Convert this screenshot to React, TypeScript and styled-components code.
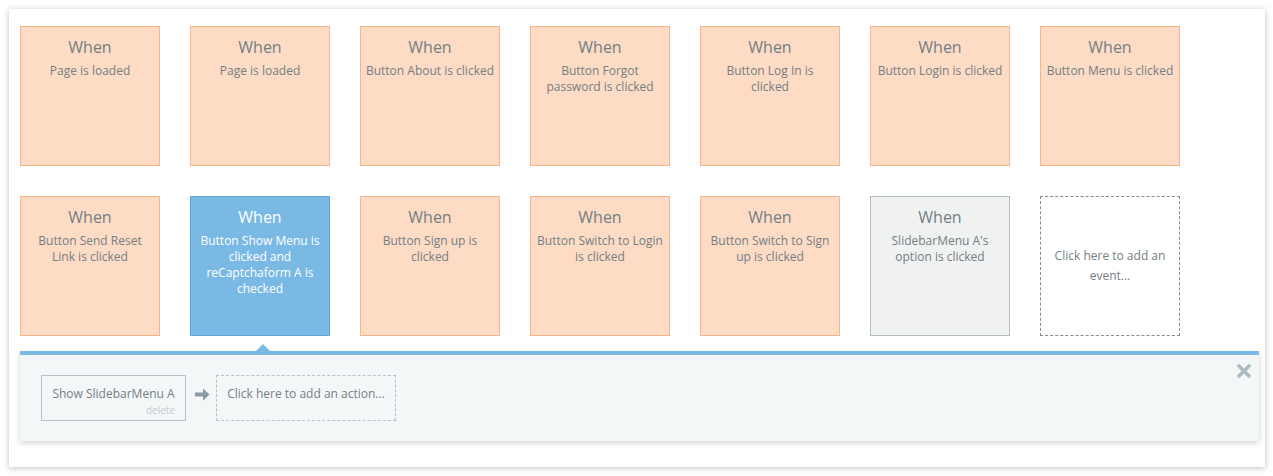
import React from 'react';
import styled, { createGlobalStyle } from 'styled-components';

const GlobalStyle = createGlobalStyle`
  body {
    margin: 0;
    background: #ffffff;
    font-family: 'Open Sans', 'Liberation Sans', sans-serif;
  }
`;

type Variant = 'normal' | 'active' | 'muted' | 'empty';

const palette: Record<Variant, { bg: string; border: string; color: string }> = {
  normal: { bg: '#fddbc4', border: '#f4b48a', color: '#737f85' },
  active: { bg: '#7bb9e5', border: '#5ea5d9', color: '#ffffff' },
  muted: { bg: '#f0f2f2', border: '#b3bec3', color: '#737f85' },
  empty: { bg: '#ffffff', border: '#8a8a8a', color: '#737f85' },
};

const Page = styled.div`
  padding: 9px 8px 9px 9px;
`;

const Sheet = styled.div`
  width: 1256px;
  height: 458px;
  box-sizing: border-box;
  background: #fff;
  box-shadow: 0 1px 6px rgba(0, 0, 0, 0.25);
  padding: 17px 0 0 11px;
`;

const Grid = styled.div`
  display: grid;
  grid-template-columns: repeat(7, 140px);
  column-gap: 30px;
  row-gap: 30px;
`;

const Card = styled.div<{ $variant: Variant }>`
  width: 140px;
  height: 140px;
  box-sizing: border-box;
  background: ${(p) => palette[p.$variant].bg};
  border: 1px ${(p) => (p.$variant === 'empty' ? 'dashed' : 'solid')} ${(p) => palette[p.$variant].border};
  color: ${(p) => palette[p.$variant].color};
  text-align: center;
  padding: 9px 4px 0;
  display: flex;
  flex-direction: column;
  align-items: center;
  ${(p) => (p.$variant === 'empty' ? 'justify-content: center; padding: 0 12px;' : '')}
`;

const When = styled.div`
  font-size: 16px;
  line-height: 22px;
`;

const Desc = styled.div`
  font-size: 12px;
  line-height: 16px;
  margin-top: 5px;
  white-space: pre-line;
`;

const AddEvent = styled.div`
  font-size: 12px;
  line-height: 20px;
`;

const Panel = styled.div`
  position: relative;
  margin-top: 15px;
  width: 1239px;
  height: 90px;
  box-sizing: border-box;
  background: #f4f7f8;
  border-top: 4px solid #7bb9e5;
  box-shadow: 0 2px 6px rgba(0, 0, 0, 0.18);
  padding: 20px 21px;
  display: flex;
  align-items: flex-start;
`;

const Pointer = styled.div<{ $left: number }>`
  position: absolute;
  top: -11px;
  left: ${(p) => p.$left}px;
  width: 0;
  height: 0;
  border-left: 7px solid transparent;
  border-right: 7px solid transparent;
  border-bottom: 7px solid #7bb9e5;
`;

const ActionBox = styled.div`
  width: 145px;
  height: 46px;
  box-sizing: border-box;
  border: 1px solid #b8c2c6;
  color: #737f85;
  font-size: 12px;
  line-height: 16px;
  display: flex;
  flex-direction: column;
  align-items: center;
  padding-top: 10px;
`;

const Delete = styled.span`
  align-self: flex-end;
  margin-right: 10px;
  font-size: 10px;
  line-height: 12px;
  margin-top: 2px;
  color: #c3cacd;
`;

const ArrowWrap = styled.div`
  width: 30px;
  height: 38px;
  box-sizing: border-box;
  display: flex;
  align-items: center;
  justify-content: center;
  padding-left: 2px;
`;

const AddAction = styled.div`
  width: 180px;
  height: 46px;
  box-sizing: border-box;
  border: 1px dashed #b8c2c6;
  color: #737f85;
  font-size: 12px;
  line-height: 16px;
  text-align: center;
  padding-top: 10px;
`;

const Close = styled.div`
  position: absolute;
  top: 9px;
  right: 8px;
  width: 14px;
  height: 14px;
  display: flex;
`;

type EventItem = { text: string; variant: Variant };

const events: EventItem[] = [
  { text: 'Page is loaded', variant: 'normal' },
  { text: 'Page is loaded', variant: 'normal' },
  { text: 'Button About is clicked', variant: 'normal' },
  { text: 'Button Forgot\npassword is clicked', variant: 'normal' },
  { text: 'Button Log In is\nclicked', variant: 'normal' },
  { text: 'Button Login is clicked', variant: 'normal' },
  { text: 'Button Menu is clicked', variant: 'normal' },
  { text: 'Button Send Reset\nLink is clicked', variant: 'normal' },
  { text: 'Button Show Menu is\nclicked and\nreCaptchaform A is\nchecked', variant: 'active' },
  { text: 'Button Sign up is\nclicked', variant: 'normal' },
  { text: 'Button Switch to Login\nis clicked', variant: 'normal' },
  { text: 'Button Switch to Sign\nup is clicked', variant: 'normal' },
  { text: "SlidebarMenu A's\noption is clicked", variant: 'muted' },
];

function App() {
  return (
    <Page>
      <GlobalStyle />
      <Sheet>
        <Grid>
          {events.map((ev, i) => (
            <Card key={i} $variant={ev.variant}>
              <When>When</When>
              <Desc>{ev.text}</Desc>
            </Card>
          ))}
          <Card $variant="empty">
            <AddEvent>Click here to add an event...</AddEvent>
          </Card>
        </Grid>
        <Panel>
          <Pointer $left={236} />
          <ActionBox>
            <span>Show SlidebarMenu A</span>
            <Delete>delete</Delete>
          </ActionBox>
          <ArrowWrap>
            <svg width="15" height="13" viewBox="0 0 15 13">
              <path d="M0 4.5 H8 V0.5 L14.5 6.5 L8 12.5 V8.5 H0 Z" fill="#8c9ba1" />
            </svg>
          </ArrowWrap>
          <AddAction>Click here to add an action...</AddAction>
          <Close>
            <svg width="14" height="14" viewBox="0 0 14 14">
              <path d="M2 2 L12 12 M12 2 L2 12" stroke="#aebbc1" strokeWidth="3.6" strokeLinecap="round" />
            </svg>
          </Close>
        </Panel>
      </Sheet>
    </Page>
  );
}

export default App;
